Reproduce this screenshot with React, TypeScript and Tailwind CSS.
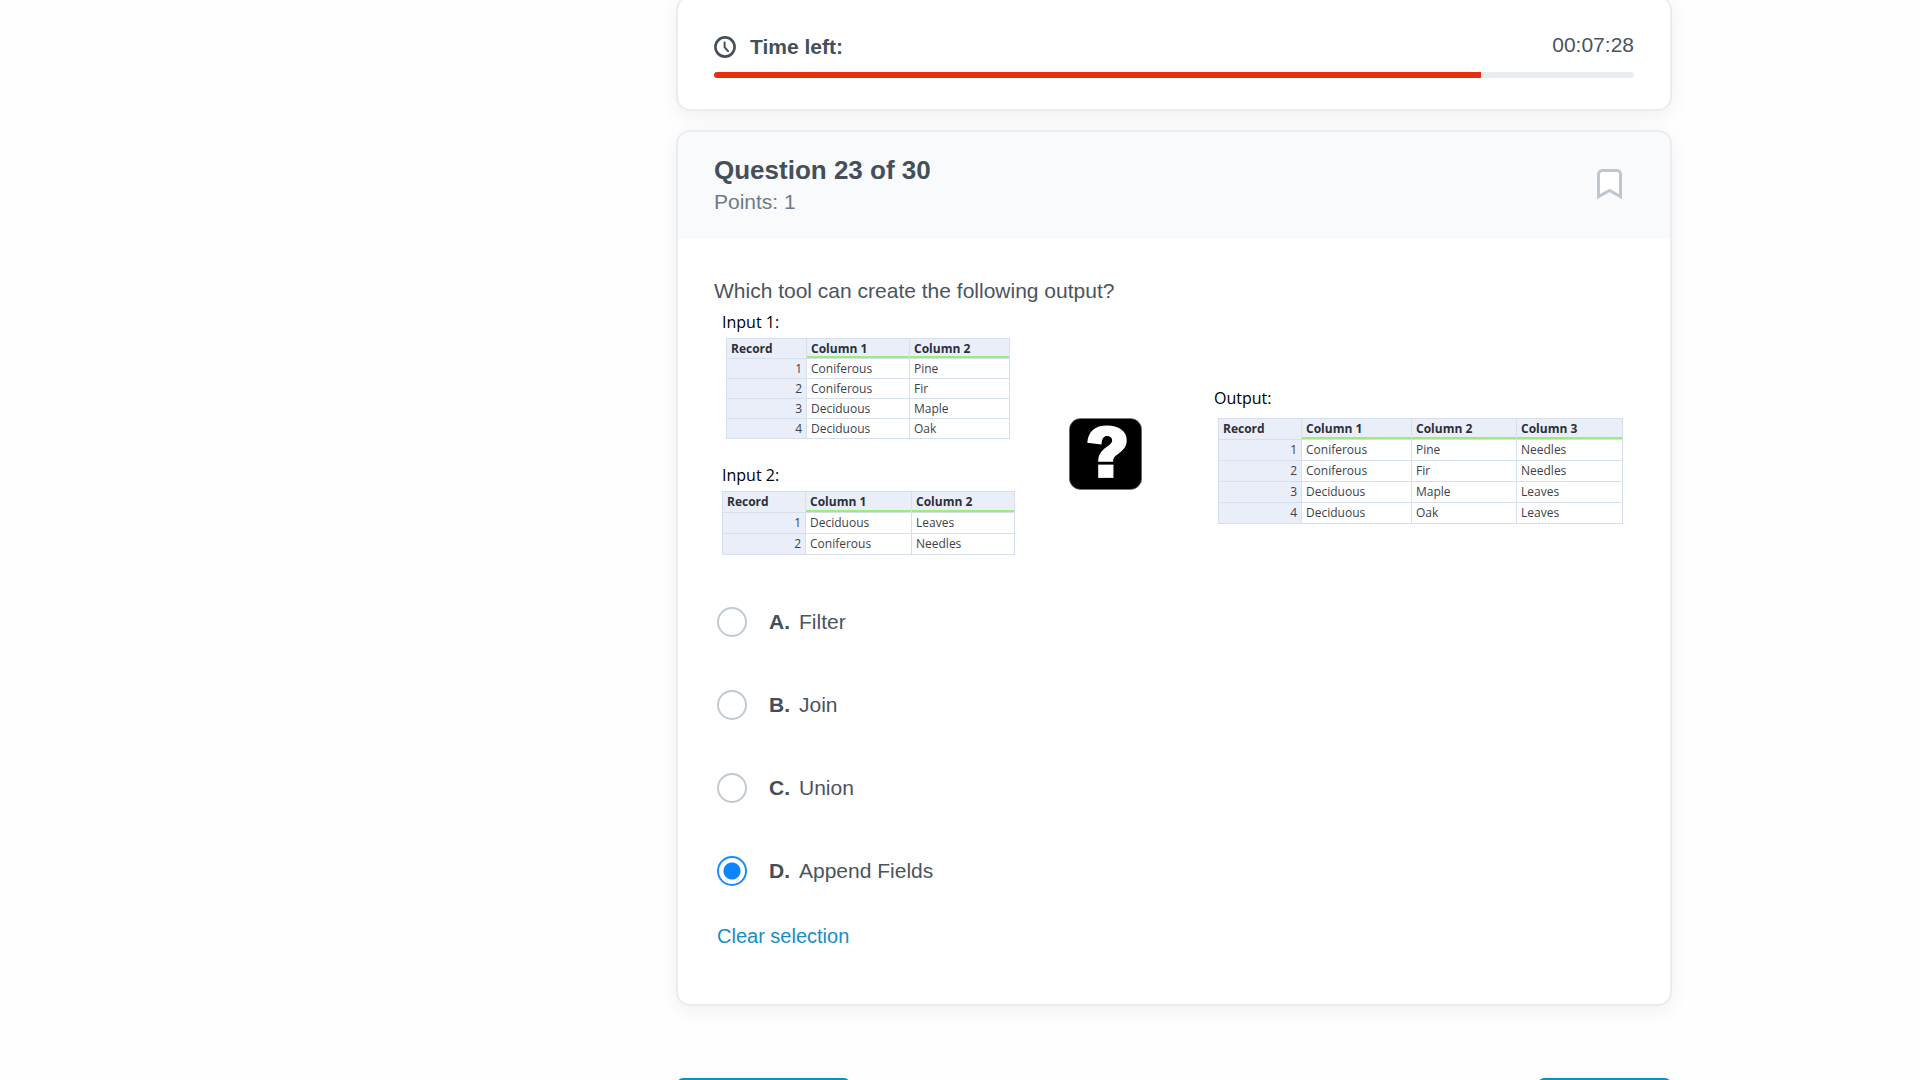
import { useState } from "react";

const HEAD = "border border-[#d6dff0] px-1 text-left font-bold text-[#2b2f3a]";

type TableProps = {
  label: string;
  widths: string[];
  rows: string[][];
  rowClass: string;
};

function DataTable({ label, widths, rows, rowClass }: TableProps) {
  return (
    <table
      aria-label={label}
      className="table-fixed border-collapse border border-[#d6dff0] bg-white text-xs leading-4 text-[#3c3f4c]"
    >
      <colgroup>
        {widths.map((w, i) => (
          <col key={i} className={w} />
        ))}
      </colgroup>
      <thead>
        <tr className={rowClass + " bg-[#e9eef9]"}>
          <th className={HEAD}>Record</th>
          {widths.slice(1).map((_, i) => (
            <th key={i} className={HEAD + " shadow-[inset_0_-2px_0_#98ee76]"}>
              Column {i + 1}
            </th>
          ))}
        </tr>
      </thead>
      <tbody>
        {rows.map((row, i) => (
          <tr key={i} className={rowClass}>
            <td className="border border-[#d6dff0] bg-[#e9eef9] px-1 text-right">{i + 1}</td>
            {row.map((cell, j) => (
              <td key={j} className="border border-[#d6dff0] px-1">
                {cell}
              </td>
            ))}
          </tr>
        ))}
      </tbody>
    </table>
  );
}

function ClockIcon() {
  return (
    <svg viewBox="0 0 22 22" className="size-[22px]" fill="none" stroke="#444f5a" aria-hidden="true">
      <circle cx="11" cy="11" r="9.6" strokeWidth="2.6" />
      <path d="M10.6 6.4v4.8l3.4 4" strokeWidth="2" strokeLinecap="round" strokeLinejoin="round" />
    </svg>
  );
}

function BookmarkIcon() {
  return (
    <svg viewBox="0 0 25 30" className="h-[30px] w-[25px]" fill="#fff" stroke="#bcc7d0" strokeWidth="3" aria-hidden="true">
      <path d="M1.5 27.6V5.3a3.8 3.8 0 0 1 3.8-3.8h14.4a3.8 3.8 0 0 1 3.8 3.8V27.6L12.5 21.4z" />
    </svg>
  );
}

function MysteryTool() {
  return (
    <svg viewBox="0 0 220 216" className="h-[72px] w-[73px]" role="img" aria-label="Unknown tool">
      <rect x="1" y="1" width="218" height="214" rx="34" fill="#000" stroke="#777" strokeWidth="2" />
      <path
        fill="#fff"
        d="M55 74C58 40 78 22 114 22C150 22 174 39 174 66C174 84 165 96 149 107C137 115 133 120 133 131H88C88 112 95 101 112 88C125 78 130 74 130 67C130 59 124 54 115 54C105 54 99 61 98 79Z"
      />
      <rect x="88" y="140" width="46" height="40" fill="#fff" />
    </svg>
  );
}

const OPTIONS = [
  ["A", "Filter"],
  ["B", "Join"],
  ["C", "Union"],
  ["D", "Append Fields"],
];

const CARD = "rounded-[14px] border-2 border-[#e9edf1] bg-white shadow-[0_5px_20px_rgba(0,0,0,0.06)]";

export default function App() {
  const [choice, setChoice] = useState("D");

  return (
    <div className="grid h-screen grid-cols-[676fr_996fr_248fr] overflow-hidden bg-[#fefefe] font-['Liberation_Sans',Arial,sans-serif] text-xl text-[#4a545e]">
      <main className="col-start-2 flex min-w-0 flex-col">
        <section className={CARD + " -mt-1 shrink-0 px-9 pt-[35px] pb-[31px]"}>
          <div className="flex items-start justify-between pb-[11px]">
            <h2 className="flex items-center gap-3.5 text-[21px] leading-7 font-bold text-[#444f5a]">
              <ClockIcon />
              Time left:
            </h2>
            <time className="text-[21px] leading-6">00:07:28</time>
          </div>
          <div
            role="progressbar"
            aria-label="Time left"
            aria-valuenow={83}
            className="h-1.5 overflow-hidden rounded-full bg-[#e8ecef]"
          >
            <div className="h-full bg-[#e62e10]" style={{ width: "83.4%" }} />
          </div>
        </section>

        <section className={CARD + " mt-[19px] shrink-0 overflow-hidden"}>
          <header className="flex h-[107px] items-center justify-between bg-[#f8fafc] pr-12 pl-9">
            <div>
              <h1 className="text-[26px] leading-8 font-bold text-[#444f5a]">Question 23 of 30</h1>
              <p className="text-[21px] leading-8 text-[#6f7b86]">Points: 1</p>
            </div>
            <button type="button" aria-label="Bookmark question" className="pb-1">
              <BookmarkIcon />
            </button>
          </header>

          <div className="px-9 pt-9 pb-[54px]">
            <p className="text-[21px] leading-8">Which tool can create the following output?</p>

            <div className="flex items-start pl-2 font-['Open_Sans','Noto_Sans',sans-serif] text-base leading-6 text-black">
              <div className="pt-[3px]">
                <p>Input 1:</p>
                <div className="pt-1 pl-1">
                  <DataTable
                    label="Input 1"
                    widths={["w-20", "w-[103px]", "w-[100px]"]}
                    rowClass="h-5"
                    rows={[
                      ["Coniferous", "Pine"],
                      ["Coniferous", "Fir"],
                      ["Deciduous", "Maple"],
                      ["Deciduous", "Oak"],
                    ]}
                  />
                </div>
                <p className="pt-6">Input 2:</p>
                <div className="pt-1">
                  <DataTable
                    label="Input 2"
                    widths={["w-[83px]", "w-[106px]", "w-[103px]"]}
                    rowClass="h-[21px]"
                    rows={[
                      ["Deciduous", "Leaves"],
                      ["Coniferous", "Needles"],
                    ]}
                  />
                </div>
              </div>
              <div className="ml-[54px] pt-[111px]">
                <MysteryTool />
              </div>
              <div className="ml-[72px] pt-[79px]">
                <p>Output:</p>
                <div className="pt-2 pl-1">
                  <DataTable
                    label="Output"
                    widths={["w-[83px]", "w-[110px]", "w-[105px]", "w-[106px]"]}
                    rowClass="h-[21px]"
                    rows={[
                      ["Coniferous", "Pine", "Needles"],
                      ["Coniferous", "Fir", "Needles"],
                      ["Deciduous", "Maple", "Leaves"],
                      ["Deciduous", "Oak", "Leaves"],
                    ]}
                  />
                </div>
              </div>
            </div>

            <fieldset aria-label="Answer options" className="pt-[25px] pl-[3px]">
              {OPTIONS.map(([key, text]) => (
                <label key={key} className="flex h-[83px] items-center">
                  <input
                    type="radio"
                    name="answer"
                    value={key}
                    checked={choice === key}
                    onChange={() => setChoice(key)}
                    className="size-[30px] appearance-none rounded-full border-2 border-[#c0cad3] bg-white checked:border-[#1a8cff] checked:bg-[radial-gradient(circle,#0a84ff_8px,#fff_9px)]"
                  />
                  <span className="w-[52px] pl-[22px] text-[21px] font-bold text-[#444f5a]">{key}.</span>
                  <span className="text-[21px]">{text}</span>
                </label>
              ))}
            </fieldset>
            <button
              type="button"
              onClick={() => setChoice("")}
              className="mt-2.5 ml-[3px] block text-xl leading-7 text-[#158dc4]"
            >
              Clear selection
            </button>
          </div>
        </section>

        <nav aria-label="Question navigation" className="mt-[72px] flex shrink-0 justify-between px-px">
          <button type="button" aria-label="Previous" className="h-12 w-[173px] rounded-md bg-[#0693c6]" />
          <button type="button" aria-label="Next" className="h-12 w-[133px] rounded-md bg-[#0693c6]" />
        </nav>
      </main>
    </div>
  );
}
